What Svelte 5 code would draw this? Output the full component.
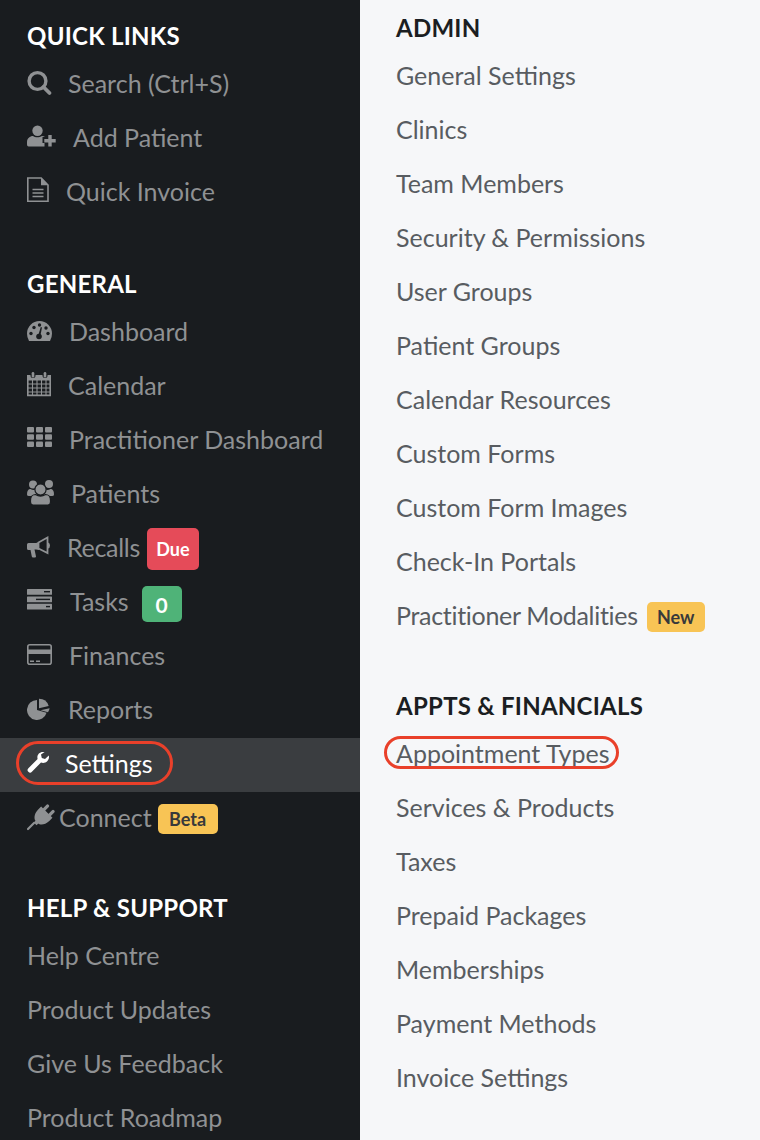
<script>
  // slot = icon width plus its gap, the source icons all have different widths
  const quickLinks = [
    { label: "Search (Ctrl+S)", icon: "search", slot: 41 },
    { label: "Add Patient", icon: "addPatient", slot: 46 },
    { label: "Quick Invoice", icon: "invoice", slot: 39 }
  ];
  const general = [
    { label: "Dashboard", icon: "gauge", slot: 42 },
    { label: "Calendar", icon: "calendar", slot: 41 },
    { label: "Practitioner Dashboard", icon: "grid", slot: 42 },
    { label: "Patients", icon: "users", slot: 44 },
    { label: "Recalls", icon: "bullhorn", slot: 40, badge: "Due", tone: "due" },
    { label: "Tasks", icon: "tasks", slot: 43, badge: "0", tone: "count" },
    { label: "Finances", icon: "card", slot: 42 },
    { label: "Reports", icon: "pie", slot: 41 },
    { label: "Settings", icon: "wrench", slot: 38, active: true },
    { label: "Connect", icon: "plug", slot: 32, badge: "Beta", tone: "flag" }
  ];
  const help = ["Help Centre", "Product Updates", "Give Us Feedback", "Product Roadmap"];
  const admin = [
    "General Settings", "Clinics", "Team Members", "Security & Permissions", "User Groups",
    "Patient Groups", "Calendar Resources", "Custom Forms", "Custom Form Images", "Check-In Portals"
  ];
  const financials = [
    "Services & Products", "Taxes", "Prepaid Packages", "Memberships", "Payment Methods", "Invoice Settings"
  ];
</script>

{#snippet glyph(name)}
  {#if name === "search"}
    <circle cx="10.5" cy="12" r="8.4" fill="none" stroke="currentColor" stroke-width="3.4" />
    <path d="M16.5 18l6 6" stroke="currentColor" stroke-width="3.8" stroke-linecap="round" />
  {:else if name === "addPatient"}
    <circle cx="10.5" cy="7.7" r="5.2" />
    <path d="M1.6 23.5Q0 23.5 0 21.5V19C0 15.500 3 13 6 13 8 14.800 12.500 14.800 15 13 16 13 17 13.300 18 14H15.500V20H17.500V23.500Z" />
    <path d="M21.300 12h3.400v4h4v3.400h-4v4h-3.400v-4h-4V16h4z" />
  {:else if name === "invoice"}
    <path d="M.8 1h13.400l6.800 7v16.200H.8z" fill="none" stroke="currentColor" stroke-width="1.600" />
    <path d="M14 1v7.200h7z" />
    <path d="M5.500 12.500h11M5.500 16h11M5.500 19.500h11" stroke="currentColor" stroke-width="1.500" fill="none" />
  {:else if name === "gauge"}
    <path d="M2 24Q0 20.500 0 16.500a12.500 12.500 0 0 1 25 0Q25 20.500 23 24z" />
    <g class="cut">
      <circle cx="4" cy="16.500" r="1.700" />
      <circle cx="7" cy="10.500" r="1.700" />
      <circle cx="12.500" cy="8" r="1.700" />
      <circle cx="19" cy="11" r="1.700" />
      <circle cx="21" cy="16.500" r="1.700" />
      <circle cx="12" cy="19.500" r="2.800" />
      <path d="M11 19l2.800-9 1.200.4-1.800 9.200z" />
    </g>
  {:else if name === "calendar"}
    <path d="M.8 4.800h22.400v19.600H.8z" fill="none" stroke="currentColor" stroke-width="1.600" />
    <path d="M0 4h24v5.500H0z" />
    <path d="M1 13h22M1 17h22M1 21h22M5.500 9v15M10 9v15M14.500 9v15M19 9v15" stroke="currentColor" stroke-width="1.100" fill="none" />
    <rect class="cut" x="3.500" y="0" width="5" height="7" rx="2.500" />
    <rect class="cut" x="15.500" y="0" width="5" height="7" rx="2.500" />
    <rect x="4.700" y="1" width="2.600" height="5.500" rx="1.300" />
    <rect x="16.700" y="1" width="2.600" height="5.500" rx="1.300" />
  {:else if name === "grid"}
    {#each [2, 9.3, 16.600] as y}
      {#each [0, 9, 18] as x}
        <rect {x} {y} width="7" height="5.500" rx="1" />
      {/each}
    {/each}
  {:else if name === "users"}
    <circle cx="6" cy="5.500" r="4" />
    <circle cx="22" cy="5" r="4" />
    <path d="M0 15.500Q0 10 3.500 10 6 11.500 9 10.500L10 17H2Q0 17 0 15.500z" />
    <path d="M27 15.500Q27 10 23.500 10 21 11.500 18 10.500L17 17H25Q27 17 27 15.500z" />
    <circle class="outlined" cx="13.500" cy="10.500" r="5.600" />
    <path class="outlined" d="M6 26Q3.500 26 3.500 23V21.500C3.500 17.500 6 15.500 8.500 15.500 11.500 17.500 15.500 17.500 18.500 15.500 21 15.500 23.500 17.500 23.500 21.500V23Q23.500 26 21 26z" />
  {:else if name === "bullhorn"}
    <path d="M1.500 10H9l3-1v8l-3-.5H7.500l1.500 7q0 1-1 1H6q-1 0-1.200-1L3.500 17H1.500Q0 17 0 15.500V11.500Q0 10 1.500 10z" />
    <path d="M11.500 9.500l9-5V20l-9-4.500z" fill="none" stroke="currentColor" stroke-width="1.800" />
    <path d="M21 9.500q2 .5 2 3t-2 3z" />
  {:else if name === "tasks"}
    {#each [2, 9.500, 16.700] as y}
      <rect x="0" {y} width="25" height="5.800" rx=".6" />
    {/each}
    <rect class="cut" x="17" y="4" width="6" height="1.400" />
    <rect class="cut" x="9" y="11.700" width="14" height="1.400" />
    <rect class="cut" x="19" y="18.900" width="4" height="1.400" />
  {:else if name === "card"}
    <rect x=".8" y="3.800" width="23.400" height="19.400" rx="2" fill="none" stroke="currentColor" stroke-width="1.600" />
    <path d="M0 8.500h25v4.500H0zM3 19.500h4v1.500H3zM9 19.500h4v1.500H9z" />
  {:else if name === "pie"}
    <path d="M10 5a10 10 0 1 0 9.600 12.800L10 15z" />
    <path d="M12 3.800A10.200 10.200 0 0 1 21.700 11L12 13.200z" />
    <path d="M13.500 15.300L22.600 13.200A10.500 10.500 0 0 1 21 17.200z" />
  {:else if name === "wrench"}
    <path d="M16 3C12 3 9.600 6.500 10.600 10L1.400 19.200a2.500 2.500 0 0 0 3.500 3.600L14 13.600C18 15 22 12 22 8c0-.6-.1-1-.2-1.500L18 10l-3.200-1-.8-3.400L17.600 3.100Q16.800 3 16 3z" />
  {:else if name === "plug"}
    <path d="M1 26l6-6" stroke="currentColor" stroke-width="2.200" stroke-linecap="round" />
    <g transform="translate(14.500 14.500) rotate(45)">
      <rect x="-5.500" y="-14" width="3.200" height="8" rx="1.400" />
      <rect x="2.300" y="-14" width="3.200" height="8" rx="1.400" />
      <path d="M-8 -7.500H8V-3C8 3 4 6.500 2 6.500V9H-2V6.500C-4 6.500-8 3-8-3z" />
    </g>
  {/if}
{/snippet}

<div class="page">
  <nav class="sidebar">
    <section>
      <h3>QUICK LINKS</h3>
      {#each quickLinks as item}
        <a class="row">
          <svg class="icon" width={item.slot} height="28" viewBox="0 0 {item.slot} 28" preserveAspectRatio="xMinYMid meet">{@render glyph(item.icon)}</svg>
          <span>{item.label}</span>
        </a>
      {/each}
    </section>

    <section>
      <h3>GENERAL</h3>
      {#each general as item}
        <a class="row" class:active={item.active}>
          <svg class="icon" width={item.slot} height="28" viewBox="0 0 {item.slot} 28" preserveAspectRatio="xMinYMid meet">{@render glyph(item.icon)}</svg>
          <span class="label" class:tight={item.tone === "due"}>
            {item.label}
            {#if item.active}<i class="ring settings-ring"></i>{/if}
          </span>
          {#if item.badge}<b class="badge {item.tone}">{item.badge}</b>{/if}
        </a>
      {/each}
    </section>

    <section>
      <h3>HELP &amp; SUPPORT</h3>
      {#each help as label}
        <a class="row"><span>{label}</span></a>
      {/each}
    </section>
  </nav>

  <main class="panel">
    <section>
      <h3>ADMIN</h3>
      {#each admin as label}
        <a class="row"><span>{label}</span></a>
      {/each}
      <a class="row"><span class="tight">Practitioner Modalities</span><b class="badge flag new">New</b></a>
    </section>

    <section>
      <h3>APPTS &amp; FINANCIALS</h3>
      <a class="row"><span class="label">Appointment Types<i class="ring types-ring"></i></span></a>
      {#each financials as label}
        <a class="row"><span>{label}</span></a>
      {/each}
    </section>
  </main>
</div>

<style>
  :global(body) {
    margin: 0;
  }

  .page {
    display: grid;
    grid-template-columns: 360px 400px;
    height: 1140px;
    overflow: hidden;
    font-family: Lato, "Open Sans", sans-serif;
    font-size: 25px;
  }

  .sidebar {
    background: #191c1f;
    color: #8f9193;
    padding-top: 18px;
  }

  .panel {
    background: #f6f7f9;
    color: #585c61;
    padding: 10px 0 0 36px;
  }

  section {
    margin-bottom: 46px;
  }

  .sidebar section:first-child {
    margin-bottom: 48px;
  }

  h3 {
    margin: 0;
    height: 38px;
    line-height: 36px;
    font-size: 24px;
    font-weight: 700;
    letter-spacing: 0.25px;
  }

  .sidebar h3 {
    padding-left: 27px;
    color: #fff;
  }

  .panel h3 {
    color: #1b1e22;
  }

  .row {
    display: flex;
    align-items: center;
    height: 54px;
  }

  .sidebar .row {
    padding-left: 27px;
  }

  /* band sits 2px below the text centre in the source */
  .row.active {
    box-sizing: border-box;
    margin: 2px 0 -2px;
    padding-bottom: 4px;
    background: #3a3d40;
    color: #fff;
  }

  .icon {
    flex: none;
    fill: currentColor;
  }

  .cut {
    fill: #191c1f;
  }

  .outlined {
    stroke: #191c1f;
    stroke-width: 1.2;
  }

  .label {
    position: relative;
  }

  .tight {
    letter-spacing: -0.3px;
  }

  .ring {
    position: absolute;
    border: 3.5px solid #e9402a;
    border-radius: 22px;
    box-sizing: border-box;
  }

  .settings-ring {
    left: -49px;
    right: -20px;
    top: -7px;
    bottom: -7px;
  }

  .types-ring {
    left: -12px;
    right: -9px;
    top: -2px;
    bottom: -1px;
  }

  .badge {
    display: flex;
    align-items: center;
    justify-content: center;
    border-radius: 5px;
    font-size: 18px;
    font-weight: 700;
  }

  .due {
    width: 52px;
    height: 42px;
    margin: 4px 0 0 7px;
    background: #e54b59;
    color: #fff;
  }

  .count {
    width: 40px;
    height: 36px;
    margin: 6px 0 0 13px;
    background: #4fb378;
    color: #fff;
    font-size: 21px;
  }

  .flag {
    width: 60px;
    height: 30px;
    margin: 4px 0 0 6px;
    background: #f8c455;
    color: #38393b;
  }

  .new {
    width: 58px;
    margin-left: 9px;
  }
</style>
